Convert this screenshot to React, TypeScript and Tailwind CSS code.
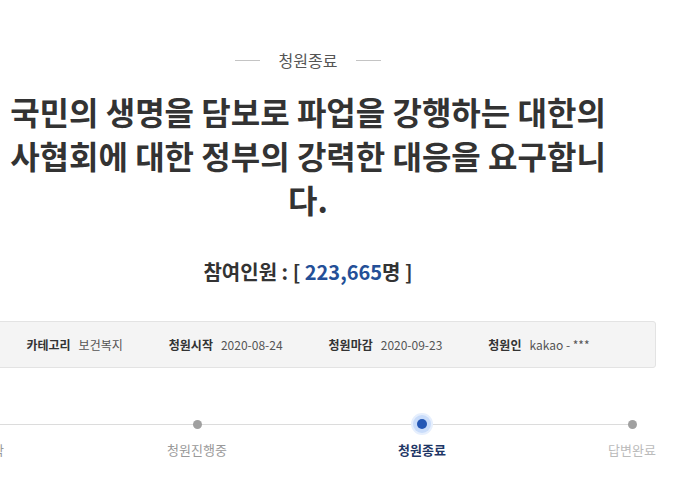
import React from 'react';

interface Step {
  label: string;
  state: 'done' | 'active' | 'todo';
  gap: string;
}

const steps: Step[] = [
  { label: '청원시작', state: 'done', gap: 'ml-0' },
  { label: '청원진행중', state: 'done', gap: 'ml-[137px]' },
  { label: '청원종료', state: 'active', gap: 'ml-[145px]' },
  { label: '답변완료', state: 'todo', gap: 'ml-[130px]' },
];

const meta = [
  { label: '카테고리', value: '보건복지' },
  { label: '청원시작', value: '2020-08-24' },
  { label: '청원마감', value: '2020-09-23' },
  { label: '청원인', value: 'kakao - ***' },
];

export default function App() {
  const font = { fontFamily: '"Noto Sans CJK KR", "Noto Sans", sans-serif' };

  return (
    <div className="w-[680px] h-[480px] overflow-hidden bg-white" style={font}>
      <div className="w-[696px] ml-[-40px] flex flex-col items-center">
        {/* status header */}
        <div className="mt-[48px] flex items-center gap-[19px]">
          <span className="w-[25px] h-px bg-[#c4c4c4]"></span>
          <span className="text-[16px] leading-[24px] text-[#555]">청원종료</span>
          <span className="w-[25px] h-px bg-[#c4c4c4]"></span>
        </div>

        {/* title */}
        <h1 className="mt-[17px] w-[622px] text-center text-[32px] leading-[44px] font-bold text-[#333]">
          국민의 생명을 담보로 파업을 강행하는 대한의사협회에 대한 정부의 강력한 대응을 요구합니다.
        </h1>

        {/* count */}
        <div className="mt-[37px] text-[20px] leading-[28px] font-bold text-[#333]">
          참여인원 : [ <span className="text-[#244f97]">223,665</span>명 ]
        </div>

        {/* info box */}
        <div className="mt-[35px] self-stretch h-[47px] rounded-[3px] border border-[#e3e3e3] bg-[#f4f4f4] flex items-center justify-center gap-[46px]">
          {meta.map((m) => (
            <div key={m.label} className="flex items-center gap-[8px] text-[12px]">
              <span className="font-bold text-[#333]">{m.label}</span>
              <span className="text-[#555]">{m.value}</span>
            </div>
          ))}
        </div>

        {/* progress */}
        <div className="mt-[44px] self-start ml-[-20px] relative flex">
          <div className="absolute left-[40px] right-[40px] top-[12px] h-px bg-[#dcdcdc]"></div>
          {steps.map((s) => (
            <div key={s.label} className={`${s.gap} w-[80px] flex flex-col items-center relative`}>
              <div className="h-[24px] flex items-center justify-center">
                {s.state === 'active' ? (
                  <span className="w-[10px] h-[10px] rounded-full bg-[#2457b5] shadow-[0_0_0_4px_#c9dcfa,0_0_0_6px_#e6effd]"></span>
                ) : (
                  <span className="w-[9px] h-[9px] rounded-full bg-[#a0a0a0]"></span>
                )}
              </div>
              <span
                className={
                  s.state === 'active'
                    ? 'mt-[4px] text-[13px] leading-[20px] font-bold text-[#1f3766]'
                    : s.state === 'todo'
                    ? 'mt-[4px] text-[13px] leading-[20px] text-[#bbb]'
                    : 'mt-[4px] text-[13px] leading-[20px] text-[#999]'
                }
              >
                {s.label}
              </span>
            </div>
          ))}
        </div>
      </div>
    </div>
  );
}
